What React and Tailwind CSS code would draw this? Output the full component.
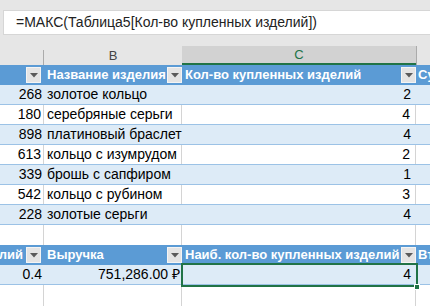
import React from "react";

// column widths in px: A (cut off), B, C, D (cut off)
const COLS = ["w-[44px]", "w-[138px]", "w-[234px]", "flex-1"];

const items = [
  ["268", "золотое кольцо", "2"],
  ["180", "серебряные серьги", "4"],
  ["898", "платиновый браслет", "4"],
  ["613", "кольцо с изумрудом", "2"],
  ["339", "брошь с сапфиром", "1"],
  ["542", "кольцо с рубином", "3"],
  ["228", "золотые серьги", "4"],
];

const Dropdown = () => (
  <div className="w-[15px] h-[16px] shrink-0 bg-[#e4e4e4] border border-[#f4f4f4] flex items-center justify-center">
    <svg width="8" height="5" viewBox="0 0 8 5">
      <path d="M0 0 L8 0 L4 4.5 Z" fill="#5a5a5a" />
    </svg>
  </div>
);

const HeaderCell = ({ w, label, drop }) => (
  <div className={`${w} h-full flex items-center overflow-hidden`}>
    <span className="pl-[3px] flex-1 whitespace-nowrap overflow-hidden text-clip">{label}</span>
    {drop && <Dropdown />}
  </div>
);

const TableHeader = ({ labels }) => (
  <div className="flex h-[20px] bg-[#5b9bd5] text-white font-bold text-[13px]">
    <div className={`${COLS[0]} h-full flex items-center justify-end pr-[3px] overflow-hidden`}>
      <span className="flex-1 whitespace-nowrap overflow-hidden flex justify-end pr-[3px]">{labels[0]}</span>
      <Dropdown />
    </div>
    <HeaderCell w={COLS[1]} label={labels[1]} drop />
    <HeaderCell w={COLS[2]} label={labels[2]} drop />
    <div className={`${COLS[3]} h-full flex items-center overflow-hidden`}>
      <span className="pl-[2px] whitespace-nowrap">{labels[3]}</span>
    </div>
  </div>
);

const DataRow = ({ cells, shaded }) => (
  <div
    className={`flex h-[20px] border-b border-[#9bc2e6] text-[14px] text-black ${
      shaded ? "bg-[#ddebf7]" : "bg-white"
    }`}
  >
    <div className={`${COLS[0]} flex items-center justify-end pr-[2px] ${shaded ? "" : "border-r border-[#d4d4d4]"}`}>
      {cells[0]}
    </div>
    <div className={`${COLS[1]} flex items-center pl-[3px] whitespace-nowrap ${shaded ? "" : "border-r border-[#d4d4d4]"}`}>
      {cells[1]}
    </div>
    <div className={`${COLS[2]} flex items-center justify-end pr-[5px] ${shaded ? "" : "border-r border-[#d4d4d4]"}`}>
      {cells[2]}
    </div>
    <div className={COLS[3]}></div>
  </div>
);

const EmptyRow = ({ h = "h-[20px]" }) => (
  <div className={`flex ${h} bg-white`}>
    <div className={`${COLS[0]} border-r border-[#d4d4d4]`}></div>
    <div className={`${COLS[1]} border-r border-[#d4d4d4]`}></div>
    <div className={`${COLS[2]} border-r border-[#d4d4d4]`}></div>
    <div className={COLS[3]}></div>
  </div>
);

export default function App() {
  return (
    <div
      className="w-[430px] h-[306px] overflow-hidden bg-white"
      style={{ fontFamily: '"Liberation Sans", Arial, sans-serif' }}
    >
      {/* formula bar */}
      <div className="h-[46px] bg-[#e6e6e6] pt-[10px] pl-[3px]">
        <div className="h-[25px] bg-white border-l border-y border-[#d6d6d6] flex items-center pl-[12px] text-[14px] text-[#222] whitespace-nowrap">
          =МАКС(Таблица5[Кол-во купленных изделий])
        </div>
      </div>

      {/* column letters */}
      <div className="flex h-[19px] bg-[#e6e6e6] text-[13px] text-[#444]">
        <div className={`${COLS[0]} border-r border-[#ababab] mt-[4px]`}></div>
        <div className={`${COLS[1]} flex items-center justify-center`}>B</div>
        <div className={`${COLS[2]} bg-[#d2d2d2] border-b-2 border-[#217346] text-[#217346] flex items-center justify-center`}>
          C
        </div>
        <div className={`${COLS[3]} border-l border-[#ababab]`}></div>
      </div>

      {/* first table */}
      <TableHeader labels={["", "Название изделия", "Кол-во купленных изделий", "Су"]} />
      {items.map((it, i) => (
        <DataRow key={i} cells={it} shaded={i % 2 === 0} />
      ))}
      <EmptyRow />

      {/* second table */}
      <TableHeader labels={["лий", "Выручка", "Наиб. кол-во купленных изделий", "Вт"]} />
      <div className="relative">
        <div className="flex h-[20px] border-b border-[#9bc2e6] bg-[#ddebf7] text-[14px] text-black">
          <div className={`${COLS[0]} flex items-center justify-end pr-[2px]`}>0.4</div>
          <div className={`${COLS[1]} flex items-center justify-end pr-[2px] whitespace-nowrap`}>751,286.00 ₽</div>
          <div className={`${COLS[2]} flex items-center justify-end pr-[5px]`}>4</div>
          <div className={COLS[3]}></div>
        </div>
        {/* selected cell */}
        <div className="absolute left-[181px] top-[-2px] w-[237px] h-[24px] border-2 border-[#217346]"></div>
        <div className="absolute left-[414px] top-[19px] w-[6px] h-[6px] bg-[#217346] border border-white"></div>
      </div>
      <EmptyRow h="h-[21px]" />
    </div>
  );
}
